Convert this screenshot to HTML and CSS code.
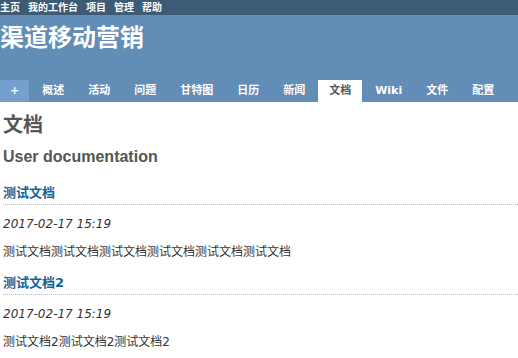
FILE: index.html
```html
<!DOCTYPE html>
<html lang="zh-CN">
<head>
  <meta charset="UTF-8" />
  <title>文档 - 渠道移动营销</title>
  <link rel="stylesheet" href="styles.css">
</head>
<body>
  <div class="top-menu">
    <a href="#">主页</a>
    <a href="#">我的工作台</a>
    <a href="#">项目</a>
    <a href="#">管理</a>
    <a href="#">帮助</a>
  </div>

  <div class="header">
    <h1>渠道移动营销</h1>
    <ul class="main-menu">
      <li><a class="new-object" href="#">+</a></li>
      <li><a href="#">概述</a></li>
      <li><a href="#">活动</a></li>
      <li><a href="#">问题</a></li>
      <li><a href="#">甘特图</a></li>
      <li><a href="#">日历</a></li>
      <li><a href="#">新闻</a></li>
      <li><a class="selected" href="#">文档</a></li>
      <li><a href="#">Wiki</a></li>
      <li><a href="#">文件</a></li>
      <li><a href="#">配置</a></li>
    </ul>
  </div>

  <div class="content">
    <h2>文档</h2>
    <h3>User documentation</h3>

    <div class="document">
      <h4><a href="#">测试文档</a></h4>
      <p class="date">2017-02-17 15:19</p>
      <p class="wiki">测试文档测试文档测试文档测试文档测试文档测试文档</p>
    </div>

    <div class="document">
      <h4><a href="#">测试文档2</a></h4>
      <p class="date">2017-02-17 15:19</p>
      <p class="wiki">测试文档2测试文档2测试文档2</p>
    </div>
  </div>
</body>
</html>
```

FILE: styles.css
```css
* {
  margin: 0;
  padding: 0;
}
body {
  font-family: "DejaVu Sans", "Noto Sans CJK SC", sans-serif;
  font-size: 12px;
  color: #333;
  background: #fff;
}
a {
  text-decoration: none;
}
.top-menu {
  background: #3e5b76;
  height: 15px;
  line-height: 15px;
  display: flex;
  gap: 8px;
  font-size: 10px;
  font-weight: bold;
}
.top-menu a {
  color: #fff;
}
.header {
  background: #628db6;
  color: #fff;
  padding-top: 9px;
}
.header h1 {
  font-size: 24px;
  line-height: 28px;
  font-weight: bold;
  height: 28px;
  margin-bottom: 28px;
}
.main-menu {
  list-style: none;
  display: flex;
  gap: 2px;
  font-size: 11px;
  font-weight: bold;
}
.main-menu a {
  display: block;
  height: 22px;
  line-height: 22px;
  padding: 0 11px;
  color: #fff;
}
.main-menu a.new-object {
  background: #759fcf;
  padding: 0 10px;
}
.main-menu a.selected {
  background: #fff;
  color: #555;
}
.content {
  padding: 11px 3px 0;
}
.content h2 {
  font-size: 20px;
  line-height: 24px;
  color: #555;
  margin-bottom: 10px;
}
.content h3 {
  font-family: "Liberation Sans", "Noto Sans CJK SC", sans-serif;
  font-size: 16px;
  line-height: 20px;
  color: #555;
  margin-bottom: 18px;
}
.document h4 {
  font-size: 13px;
  line-height: 16px;
  padding-bottom: 3px;
  border-bottom: 1px dotted #bbb;
  margin-right: -3px;
}
.document h4 a {
  color: #169;
}
.document .date {
  font-style: italic;
  line-height: 15px;
  margin-top: 12px;
}
.document .wiki {
  line-height: 15px;
  margin-top: 13px;
  margin-bottom: 15px;
}
```
